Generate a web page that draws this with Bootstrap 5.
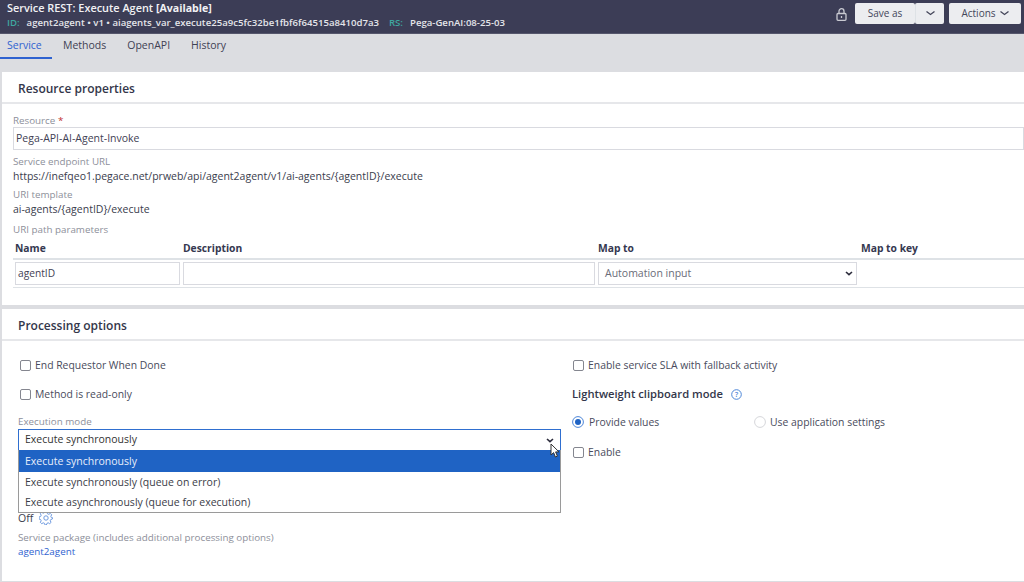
<!DOCTYPE html>
<html lang="en"><head><meta charset="utf-8"><title>Service REST</title>
<link rel="stylesheet" href="https://cdn.jsdelivr.net/npm/bootstrap@5.3.0/dist/css/bootstrap.min.css">
<style>
html,body{height:582px;overflow:hidden}
body{background:#dcdde1;font-family:"Open Sans",sans-serif;font-size:10.5px;color:#3a3d4d;line-height:1.3}
.topbar{height:34px;background:#3c3d56;color:#fff;padding:1px 3px 0 7px;border-bottom:1px solid #55566c}
.ttl{font-weight:600;font-size:10.9px;line-height:14px;color:#f1f1f4}
.ttl b{font-weight:700;font-size:10.6px}
.subt{font-weight:600;font-size:9.6px;line-height:13px;margin-top:1px;color:#e4e5ea}
.subt i{font-style:normal;color:#3fa7a0;margin-right:7px}
.rs{margin-left:10px}
.btnp{background:#ecedf0;color:#44465a;font-size:10px;height:21px;border-radius:2px;display:flex;align-items:center;justify-content:center}
.tabbar{height:38px;display:flex;align-items:flex-start}
.tabi{padding:5px 7px 0;height:25px;color:#3f4154;font-size:10.5px}
.tabi+.tabi{margin-left:7px;padding:5px 7px}
.tabi.on{color:#2f62d0;border-bottom:2px solid #2f62d0;margin-left:0}
.tabi.on+.tabi{margin-left:4px}
.panel{background:#fff;margin-left:2px}
.panelh{height:32px;padding:8px 16px 0;font-weight:600;font-size:12px;line-height:17px;color:#33364a;border-bottom:2px solid #e6e7ea}
.lbl{color:#8d8f9a;font-size:9.8px;line-height:12px}
.lbl em{color:#c03030;font-style:normal}
.inp{border:1px solid #d9dae0;background:#fff;height:23px;padding:0 2px;display:flex;align-items:center;color:#3f4154;font-size:10.5px}
.cellh{font-weight:700;font-size:10.3px;color:#353850;line-height:14px}
.chk{width:11px;height:11px;border:1px solid #84868f;border-radius:2px;background:#fff;flex:none}
.opt{font-size:10.4px;color:#494b5c;display:flex;align-items:center;gap:4px;line-height:14px}
.sel{position:relative;border:1px solid #2f6fd0;height:22px;padding:0 6px;display:flex;align-items:center;font-size:10.5px;color:#333;margin-top:1px}
.ddm{position:absolute;left:-1px;right:-1px;top:20px;background:#fff;border:1px solid #9a9a9a;border-top:0;z-index:5}
.ddm div{height:20px;line-height:20px;padding-left:6px;color:#3b3d48}
.ddm div.hit{background:#1f63c4;color:#e8eefb;height:22px;line-height:22px}
.tbl{display:grid;grid-template-columns:165px 412px 260px 1fr;column-gap:3px}
</style></head><body>
<div class="topbar d-flex justify-content-between">
 <div><div class="ttl">Service REST: Execute Agent <b>[Available]</b></div>
 <div class="subt"><i>ID:</i>agent2agent • v1 • aiagents_var_execute25a9c5fc32be1fbf6f64515a8410d7a3<i class="rs">RS:</i>Pega-GenAI:08-25-03</div></div>
 <div class="d-flex align-items-start gap-1" style="padding-top:2px">
  <svg class="me-1" style="margin-top:5px" width="11" height="13" viewBox="0 0 11 13" fill="none" stroke="#c9cad2" stroke-width="1.3"><rect x="1" y="5.5" width="9" height="6.8" rx="1"/><path d="M3 5.5V3.2a2.5 2.5 0 0 1 5 0V5.5"/><path d="M5.5 8v2"/></svg>
  <div class="d-flex"><div class="btnp" style="width:60px">Save as</div><div class="btnp border-start" style="width:29px"><svg width="9" height="5" viewBox="0 0 9 5" fill="none" stroke="#44465a" stroke-width="1.3"><path d="M.5.5l4 3 4-3"/></svg></div></div>
  <div class="btnp gap-1" style="width:72px;margin-left:1px">Actions <svg width="9" height="5" viewBox="0 0 9 5" fill="none" stroke="#44465a" stroke-width="1.3"><path d="M.5.5l4 3 4-3"/></svg></div>
 </div>
</div>
<div class="tabbar"><div class="tabi on" style="width:52px">Service</div><div class="tabi">Methods</div><div class="tabi">OpenAPI</div><div class="tabi">History</div></div>
<div class="panel" style="height:233px">
 <div class="panelh">Resource properties</div>
 <div style="padding:11px 0 0 11px">
  <div class="lbl">Resource <em>*</em></div>
  <div class="inp">Pega-API-AI-Agent-Invoke</div>
  <div class="lbl" style="margin-top:6px">Service endpoint URL</div>
  <div style="line-height:15px;margin-top:1px">https://inefqeo1.pegace.net/prweb/api/agent2agent/v1/ai-agents/{agentID}/execute</div>
  <div class="lbl" style="margin-top:5px">URI template</div>
  <div style="line-height:15px;margin-top:1px">ai-agents/{agentID}/execute</div>
  <div class="lbl" style="margin-top:7px">URI path parameters</div>
  <div class="tbl cellh border-bottom border-2" style="margin-top:5px;padding:0 0 3px 2px"><span>Name</span><span>Description</span><span>Map to</span><span>Map to key</span></div>
  <div class="tbl border-bottom" style="padding:2px 0 2px 2px">
   <div class="inp" style="padding:0 2px;font-size:10.2px">agentID</div><div class="inp"></div>
   <div class="inp justify-content-between" style="color:#6a6c78;padding:0 3px 0 6px;width:259px">Automation input<svg width="8" height="5" viewBox="0 0 8 5" fill="none" stroke="#2c2c3c" stroke-width="1.6"><path d="M1 1l3 2.6L7 1"/></svg></div><div></div>
  </div>
 </div>
</div>
<div class="panel" style="margin-top:4px;height:272px">
 <div class="panelh">Processing options</div>
 <div class="row g-0">
  <div style="width:559px;padding:17px 0 0 16px">
   <div class="opt" style="padding-left:2px"><span class="chk"></span>End Requestor When Done</div>
   <div class="opt" style="padding-left:2px;margin-top:15px"><span class="chk"></span>Method is read-only</div>
   <div class="lbl" style="margin-top:15px">Execution mode</div>
   <div class="sel">Execute synchronously
    <svg class="ms-auto" width="8" height="5" viewBox="0 0 8 5" fill="none" stroke="#2c2c3c" stroke-width="1.6"><path d="M1 1l3 2.6L7 1"/></svg>
    <svg style="position:absolute;right:0;top:13px;z-index:6" width="10" height="15" viewBox="0 0 10 15"><path d="M1 1v11l2.6-2.4L5.4 14l2-.9-1.8-4.2H9z" fill="#fff" stroke="#333" stroke-width="1"/></svg>
    <div class="ddm"><div class="hit">Execute synchronously</div><div>Execute synchronously (queue on error)</div><div>Execute asynchronously (queue for execution)</div></div>
   </div>
   <div class="d-flex align-items-center" style="gap:6px;margin-top:60px;line-height:14px">Off
    <svg width="14" height="14" viewBox="0 0 14 14" fill="none" stroke="#6f9be0" stroke-width="1"><circle cx="7" cy="7" r="2.2"/><path d="M6 1h2l.4 1.7 1.4.6 1.5-.9 1.4 1.4-.9 1.5.6 1.4L14 7l-.6 1-1.6.5-.6 1.3.9 1.5-1.4 1.4-1.5-.9-1.3.6L7.4 14H6l-.4-1.6-1.4-.6-1.5.9-1.4-1.4.9-1.5-.6-1.3L0 8V6l1.6-.5.6-1.3-.9-1.5 1.4-1.4 1.5.9 1.3-.6z"/></svg></div>
   <div class="lbl" style="margin-top:7px">Service package (includes additional processing options)</div>
   <div style="color:#2f62d0;margin-top:1px;line-height:14px;font-size:9.8px">agent2agent</div>
  </div>
  <div style="width:440px;padding:17px 0 0 11px">
   <div class="opt" style="padding-left:1px"><span class="chk"></span>Enable service SLA with fallback activity</div>
   <div class="d-flex align-items-center gap-2" style="margin-top:14px;font-weight:600;font-size:11.2px;line-height:16px;color:#33364a">Lightweight clipboard mode
    <svg width="11" height="11" viewBox="0 0 11 11" fill="none" stroke="#4d86d8"><circle cx="5.5" cy="5.5" r="4.8"/><text x="5.5" y="8" text-anchor="middle" font-size="7" fill="#4d86d8" stroke="none" font-family="Open Sans">?</text></svg></div>
   <div class="d-flex" style="margin-top:13px">
    <div class="opt" style="width:182px;gap:5px"><svg width="12" height="12" viewBox="0 0 12 12"><circle cx="6" cy="6" r="5.4" fill="#fff" stroke="#4d86d8"/><circle cx="6" cy="6" r="3" fill="#1f63c4"/></svg>Provide values</div>
    <div class="opt"><svg width="12" height="12" viewBox="0 0 12 12"><circle cx="6" cy="6" r="5.4" fill="#fff" stroke="#d5d6da"/></svg>Use application settings</div>
   </div>
   <div class="opt" style="padding-left:1px;margin-top:16px"><span class="chk"></span>Enable</div>
  </div>
 </div>
</div>
</body></html>
